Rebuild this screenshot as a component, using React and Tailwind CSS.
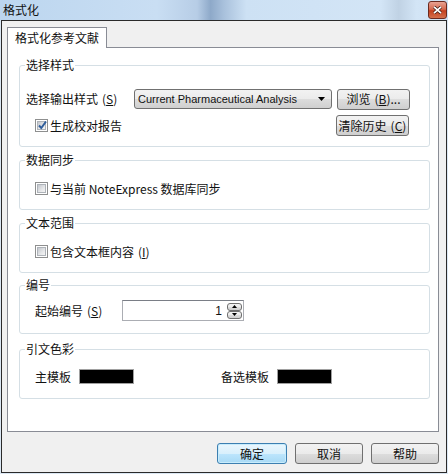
import React from "react";

const btnFace =
  "bg-[linear-gradient(to_bottom,#f2f2f2_0%,#ebebeb_50%,#dddddd_50%,#cfcfcf_100%)] border border-[#707070] rounded-[3px]";

function Key({ children }) {
  return (
    <span className="ml-[4px]">
      (<span className="underline underline-offset-[1px]">{children}</span>)
    </span>
  );
}

function CheckBox({ checked }) {
  return (
    <span className="flex h-[13px] w-[13px] shrink-0 items-center justify-center border border-[#8e8f8f] bg-white">
      <span className="relative flex h-[9px] w-[9px] items-center justify-center border border-[#aeb3b9] bg-[linear-gradient(135deg,#c3c7cd_0%,#e6e7e9_60%,#f4f4f4_100%)]">
        {checked && (
          <svg
            width="11"
            height="11"
            viewBox="0 0 11 11"
            className="absolute left-[-1px] top-[-2px]"
          >
            <path
              d="M2 5.5 L4.3 8 L9 1.5"
              fill="none"
              stroke="#2f5d9b"
              strokeWidth="2"
            />
          </svg>
        )}
      </span>
    </span>
  );
}

function Group({ title, height, className = "", children }) {
  return (
    <fieldset
      className={`w-[411px] rounded-[3px] border border-[#d5dfe5] ${height} ${className}`}
    >
      <legend className="ml-[5px] px-[1px] leading-[16px]">{title}</legend>
      {children}
    </fieldset>
  );
}

function Button({ children, width = "w-[73px]", primary = false }) {
  const face = primary
    ? "bg-[linear-gradient(to_bottom,#eaf6fd_0%,#d9f0fc_50%,#bee6fd_50%,#a7d9f5_100%)] border border-[#3c7fb1] rounded-[3px] shadow-[inset_0_0_0_1px_#c8ecfc]"
    : btnFace;
  return (
    <div
      className={`flex h-[21px] items-center justify-center leading-[16px] ${width} ${face}`}
    >
      {children}
    </div>
  );
}

function Swatch() {
  return <div className="h-[15px] w-[55px] border border-[#a0a0a0] bg-black" />;
}

export default function App() {
  return (
    <div className="flex h-[474px] w-[448px] flex-col bg-[#dbe7f3] font-['Noto_Sans_CJK_SC','Noto_Sans',sans-serif] text-[12px] text-[#111]">
      {/* title bar */}
      <div className="flex h-[20px] items-center justify-between bg-[linear-gradient(to_right,#bcd6ef_0%,#c9def3_35%,#b7cde6_44%,#8ea9c9_47%,#a9c1dc_50%,#cde1f4_55%,#d3e5f6_85%,#c0d2e4_89%,#d3e5f6_93%,#cde0f2_100%)]">
        <span className="pl-[3px] text-[12px] leading-[16px]">格式化</span>
        <div className="mr-[1px] flex h-[18px] w-[19px] items-center justify-center rounded-[3px] border border-[#6b2a1f] bg-[linear-gradient(to_bottom,#e8a393_0%,#d6694f_45%,#c4401f_55%,#d4704d_100%)]">
          <svg width="9" height="8" viewBox="0 0 9 8">
            <path
              d="M1 0.8 L8 7.2 M8 0.8 L1 7.2"
              stroke="#3a1a14"
              strokeWidth="3.2"
            />
            <path
              d="M1 0.8 L8 7.2 M8 0.8 L1 7.2"
              stroke="#ffffff"
              strokeWidth="1.8"
            />
          </svg>
        </div>
      </div>

      {/* window body */}
      <div className="mx-[1px] mb-[1px] flex flex-1 flex-col border border-[#2a2a2a] bg-[#f0f0f0] pl-[5px] pt-[6px]">
        {/* tab */}
        <div className="relative z-10 -mb-[1px] flex h-[21px] w-[100px] items-center border border-b-0 border-[#898c95] bg-white pl-[7px] leading-[16px]">
          格式化参考文献
        </div>

        {/* tab page */}
        <div className="flex h-[385px] w-[432px] flex-col border border-[#898c95] bg-white pl-[11px] pt-[9px]">
          <Group title="选择样式" height="h-[90px]">
            <div className="mt-[16px] flex h-[20px] items-center">
              <div className="w-[114px] pl-[6px] leading-[16px]">
                选择输出样式<Key>S</Key>
              </div>
              <div
                className={`flex h-[20px] w-[198px] items-center justify-between pl-[3px] pr-[6px] font-['Liberation_Sans',sans-serif] text-[11px] ${btnFace}`}
              >
                <span>Current Pharmaceutical Analysis</span>
                <svg width="7" height="4" viewBox="0 0 7 4">
                  <path d="M0 0 H7 L3.5 4 Z" fill="#000" />
                </svg>
              </div>
              <div className="ml-[5px]">
                <Button>
                  浏览<Key>B</Key>...
                </Button>
              </div>
            </div>
            <div className="mt-[6px] flex h-[21px] items-center">
              <div className="flex w-[316px] items-center gap-[2px] pl-[15px] leading-[16px]">
                <CheckBox checked />
                <span>生成校对报告</span>
              </div>
              <Button>
                清除历史<Key>C</Key>
              </Button>
            </div>
          </Group>

          <Group title="数据同步" height="h-[58px]" className="mt-[5px]">
            <div className="mt-[14px] flex items-center gap-[2px] pl-[15px] leading-[13px]">
              <CheckBox />
              <span>与当前 NoteExpress 数据库同步</span>
            </div>
          </Group>

          <Group title="文本范围" height="h-[58px]" className="mt-[5px]">
            <div className="mt-[14px] flex items-center gap-[2px] pl-[15px] leading-[13px]">
              <CheckBox />
              <span>
                包含文本框内容<Key>I</Key>
              </span>
            </div>
          </Group>

          <Group title="编号" height="h-[57px]" className="mt-[4px]">
            <div className="mt-[7px] flex h-[21px] items-center">
              <div className="w-[102px] pl-[15px] leading-[16px]">
                起始编号<Key>S</Key>
              </div>
              <div className="flex h-[21px] w-[122px] items-center justify-end border border-[#abadb3] border-t-[#7a7e86] bg-white pr-[1px]">
                <span className="pr-[5px] font-['Liberation_Sans',sans-serif] text-[12px] leading-[14px]">
                  1
                </span>
                <div className="flex h-[16px] w-[15px] flex-col">
                  <div className={`flex flex-1 items-center justify-center ${btnFace} rounded-[1px]`}>
                    <svg width="5" height="3" viewBox="0 0 5 3">
                      <path d="M0 3 H5 L2.5 0 Z" fill="#000" />
                    </svg>
                  </div>
                  <div className={`flex flex-1 items-center justify-center ${btnFace} rounded-[1px]`}>
                    <svg width="5" height="3" viewBox="0 0 5 3">
                      <path d="M0 0 H5 L2.5 3 Z" fill="#000" />
                    </svg>
                  </div>
                </div>
              </div>
            </div>
          </Group>

          <Group title="引文色彩" height="h-[58px]" className="mt-[7px]">
            <div className="mt-[12px] flex h-[15px] items-center leading-[16px]">
              <div className="flex w-[201px] items-center gap-[8px] pl-[15px]">
                <span>主模板</span>
                <Swatch />
              </div>
              <div className="flex items-center gap-[8px]">
                <span>备选模板</span>
                <Swatch />
              </div>
            </div>
          </Group>
        </div>

        {/* dialog buttons */}
        <div className="mt-[11px] flex w-[432px] justify-end gap-[8px]">
          <Button width="w-[70px]" primary>
            确定
          </Button>
          <Button width="w-[68px]">取消</Button>
          <Button width="w-[68px]">帮助</Button>
        </div>
      </div>
    </div>
  );
}
